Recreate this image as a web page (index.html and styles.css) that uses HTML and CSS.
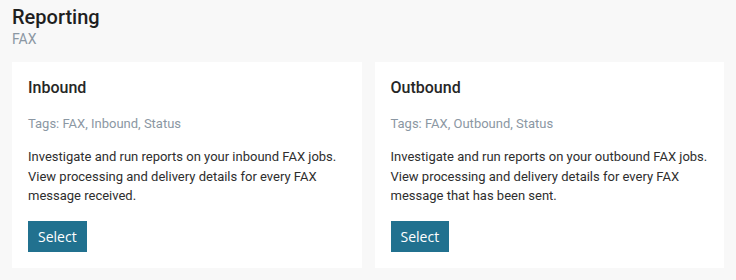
FILE: index.html
```html
<!DOCTYPE html>
<html>
<head>
<meta charset="utf-8">
<link rel="stylesheet" href="styles.css">
</head>
<body>
<div class="page">
  <header class="head">
    <h1 class="title">Reporting</h1>
    <div class="subtitle">FAX</div>
  </header>
  <div class="cards">
    <section class="card">
      <h2 class="card-title">Inbound</h2>
      <div class="tags">Tags: FAX, Inbound, Status</div>
      <p class="desc">Investigate and run reports on your inbound FAX jobs. View processing and delivery details for every FAX message received.</p>
      <button class="btn">Select</button>
    </section>
    <section class="card">
      <h2 class="card-title">Outbound</h2>
      <div class="tags">Tags: FAX, Outbound, Status</div>
      <p class="desc">Investigate and run reports on your outbound FAX jobs. View processing and delivery details for every FAX message that has been sent.</p>
      <button class="btn">Select</button>
    </section>
  </div>
</div>
</body>
</html>
```
FILE: styles.css
```css
html, body {
  margin: 0;
  padding: 0;
  background: #f8f8f8;
  font-family: Roboto, "Liberation Sans", sans-serif;
  color: #2b2b2b;
}
.page {
  padding: 4px 12px 12px;
}
.head {
  margin-bottom: 14px;
}
.title {
  margin: 0;
  font-size: 20px;
  font-weight: 500;
  line-height: 26px;
  color: #1f1f1f;
}
.subtitle {
  font-size: 14px;
  line-height: 18px;
  color: #8b97a3;
}
.cards {
  display: grid;
  grid-template-columns: 1fr 1fr;
  gap: 13px;
}
.card {
  background: #ffffff;
  padding: 16px;
}
.card-title {
  margin: 0;
  font-size: 16px;
  font-weight: 500;
  line-height: 20px;
  color: #262626;
}
.tags {
  margin-top: 16px;
  font-size: 13px;
  line-height: 19px;
  color: #8b97a3;
}
.desc {
  margin: 14px 0 0;
  font-size: 13px;
  line-height: 19.5px;
  color: #2e2e2e;
}
.btn {
  margin-top: 15px;
  display: block;
  background: #21718f;
  color: #ffffff;
  border: 0;
  border-radius: 0;
  font-family: "Open Sans", sans-serif;
  font-size: 14px;
  height: 31px;
  padding: 0 10px;
}
```
